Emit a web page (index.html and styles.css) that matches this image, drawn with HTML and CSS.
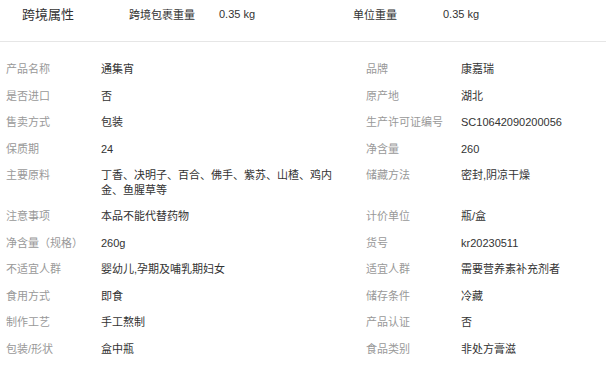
FILE: index.html
```html
<!DOCTYPE html>
<html lang="zh-CN">
<head>
<meta charset="utf-8">
<link rel="stylesheet" href="styles.css">
</head>
<body>
<div class="page">
  <div class="cross">
    <div class="cross-title">跨境属性</div>
    <div class="cross-label">跨境包裹重量</div>
    <div class="cross-value">0.35 kg</div>
    <div class="cross-label">单位重量</div>
    <div class="cross-value">0.35 kg</div>
  </div>
  <div class="attrs">
    <div class="row"><div class="k">产品名称</div><div class="v">通集宵</div><div class="k">品牌</div><div class="v">康嘉瑞</div></div>
    <div class="row"><div class="k">是否进口</div><div class="v">否</div><div class="k">原产地</div><div class="v">湖北</div></div>
    <div class="row"><div class="k">售卖方式</div><div class="v">包装</div><div class="k">生产许可证编号</div><div class="v">SC10642090200056</div></div>
    <div class="row"><div class="k">保质期</div><div class="v">24</div><div class="k">净含量</div><div class="v">260</div></div>
    <div class="row"><div class="k">主要原料</div><div class="v wrap">丁香、决明子、百合、佛手、紫苏、山楂、鸡内金、鱼腥草等</div><div class="k">储藏方法</div><div class="v">密封,阴凉干燥</div></div>
    <div class="row"><div class="k">注意事项</div><div class="v">本品不能代替药物</div><div class="k">计价单位</div><div class="v">瓶/盒</div></div>
    <div class="row"><div class="k">净含量（规格）</div><div class="v">260g</div><div class="k">货号</div><div class="v">kr20230511</div></div>
    <div class="row"><div class="k">不适宜人群</div><div class="v">婴幼儿,孕期及哺乳期妇女</div><div class="k">适宜人群</div><div class="v">需要营养素补充剂者</div></div>
    <div class="row"><div class="k">食用方式</div><div class="v">即食</div><div class="k">储存条件</div><div class="v">冷藏</div></div>
    <div class="row"><div class="k">制作工艺</div><div class="v">手工熬制</div><div class="k">产品认证</div><div class="v">否</div></div>
    <div class="row"><div class="k">包装/形状</div><div class="v">盒中瓶</div><div class="k">食品类别</div><div class="v">非处方膏滋</div></div>
  </div>
</div>
</body>
</html>
```

FILE: styles.css
```css
* { box-sizing: border-box; }
html, body { margin: 0; padding: 0; background: #fff; }
body {
  font-family: "Liberation Sans", "Noto Sans CJK SC", sans-serif;
  font-size: 11px;
  color: #333;
}
.page { width: 606px; }
.cross {
  display: flex;
  align-items: center;
  height: 42px;
  padding: 0 0 14px 22px;
  border-bottom: 1px solid #e6e6e6;
}
.cross-title { width: 107px; font-size: 13px; color: #333; }
.cross-label { width: 90px; color: #333; }
.cross-value { width: 134px; color: #333; }
.attrs { padding: 14px 0 0 6px; }
.row {
  display: grid;
  grid-template-columns: 95px 265px 95px 1fr;
  line-height: 14.5px;
  padding: 6px 0;
}
.k { color: #999; white-space: nowrap; }
.v { color: #333; padding-right: 29px; }
.wrap { word-break: break-all; }
```
